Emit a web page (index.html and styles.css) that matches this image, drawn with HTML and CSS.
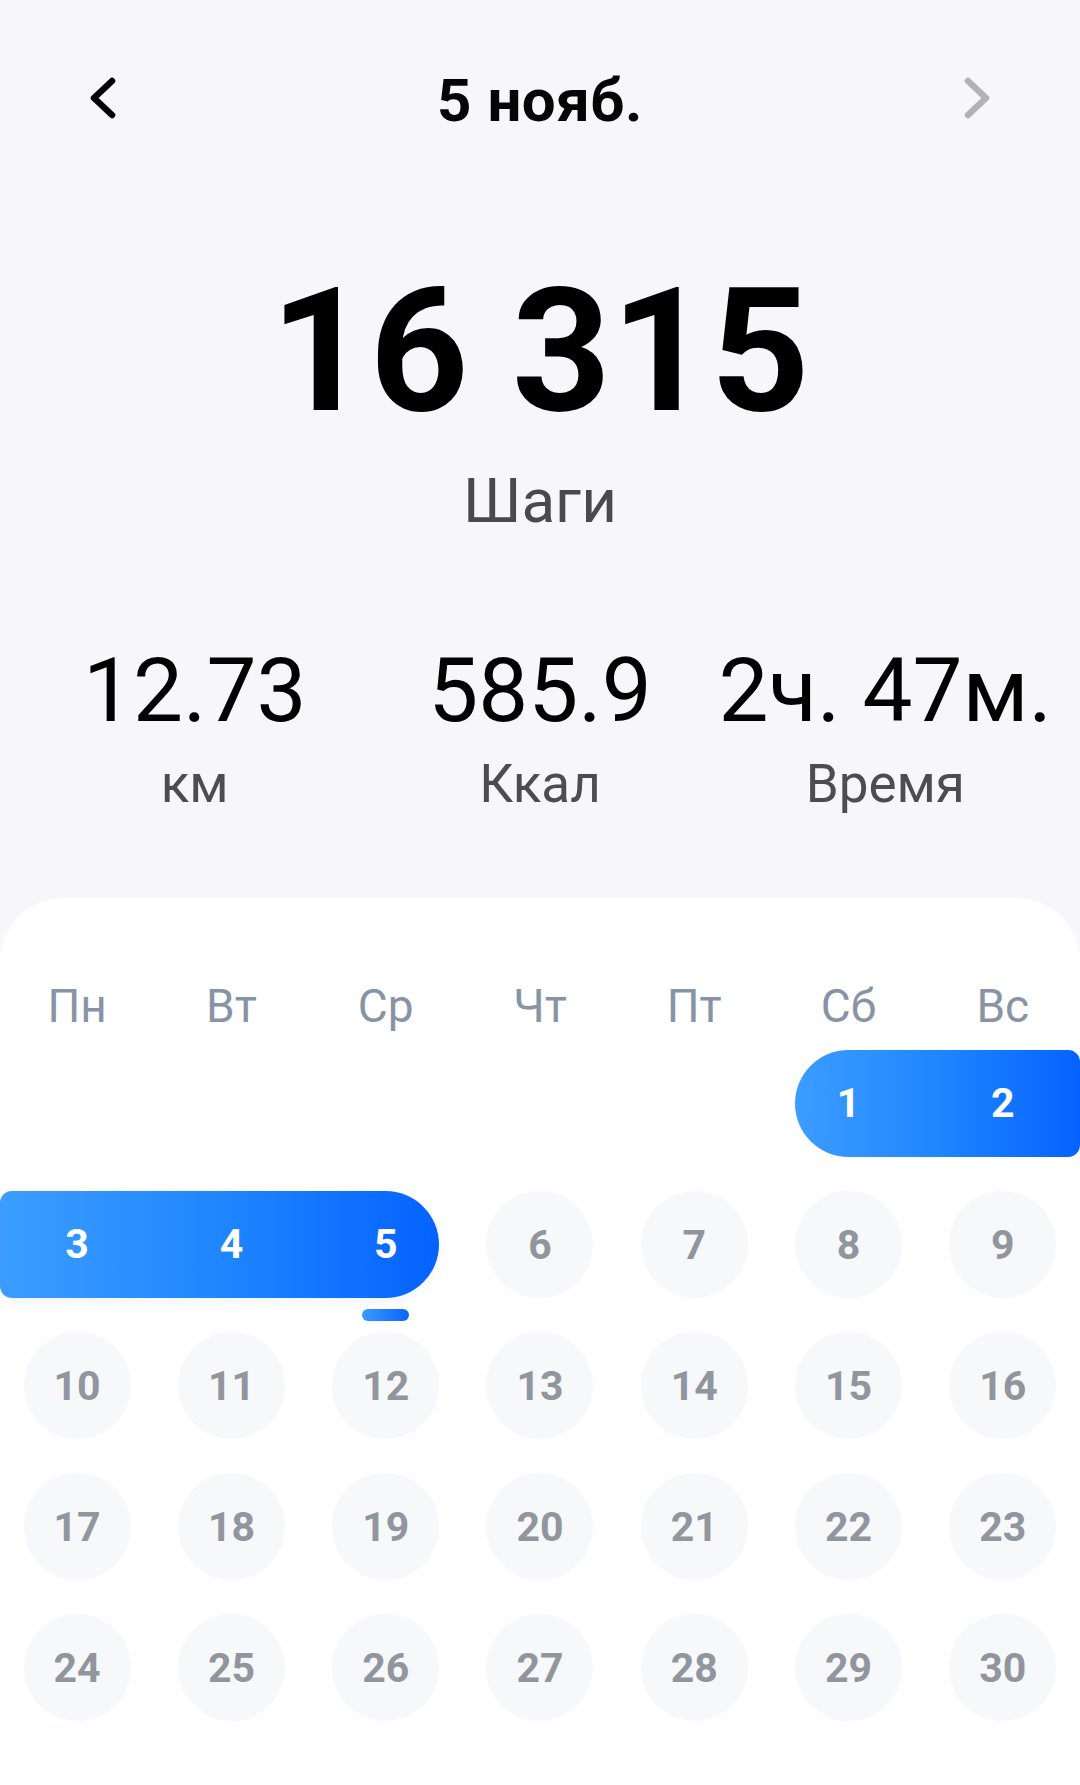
FILE: index.html
```html
<!DOCTYPE html>
<html lang="ru">
<head>
<meta charset="utf-8">
<title>Шаги</title>
<link rel="stylesheet" href="styles.css">
</head>
<body>
<div class="page">
  <header class="topbar">
    <svg class="chev" width="30" height="44" viewBox="0 0 30 44"><path d="M24 5 L6 22 L24 39" fill="none" stroke="#000" stroke-width="6.5" stroke-linecap="round" stroke-linejoin="round"/></svg>
    <div class="title">5 нояб.</div>
    <svg class="chev" width="30" height="44" viewBox="0 0 30 44"><path d="M6 5 L24 22 L6 39" fill="none" stroke="#b1b1b6" stroke-width="6.5" stroke-linecap="round" stroke-linejoin="round"/></svg>
  </header>

  <section class="summary">
    <div class="steps">16 315</div>
    <div class="steps-label">Шаги</div>
  </section>

  <section class="stats">
    <div class="stat"><div class="stat-value">12.73</div><div class="stat-label">км</div></div>
    <div class="stat"><div class="stat-value">585.9</div><div class="stat-label">Ккал</div></div>
    <div class="stat"><div class="stat-value">2ч. 47м.</div><div class="stat-label">Время</div></div>
  </section>

  <section class="card">
    <div class="weekdays">
      <div>Пн</div><div>Вт</div><div>Ср</div><div>Чт</div><div>Пт</div><div>Сб</div><div>Вс</div>
    </div>
    <div class="days">
      <div class="blank"></div><div class="blank"></div><div class="blank"></div><div class="blank"></div><div class="blank"></div>
      <div class="range range-end">
        <span>1</span><span>2</span>
      </div>
      <div class="range range-start">
        <span>3</span><span>4</span><span class="today">5</span>
      </div>
      <div class="day">6</div><div class="day">7</div><div class="day">8</div><div class="day">9</div>
      <div class="day">10</div><div class="day">11</div><div class="day">12</div><div class="day">13</div><div class="day">14</div><div class="day">15</div><div class="day">16</div>
      <div class="day">17</div><div class="day">18</div><div class="day">19</div><div class="day">20</div><div class="day">21</div><div class="day">22</div><div class="day">23</div>
      <div class="day">24</div><div class="day">25</div><div class="day">26</div><div class="day">27</div><div class="day">28</div><div class="day">29</div><div class="day">30</div>
    </div>
  </section>
</div>
</body>
</html>
```

FILE: styles.css
```css
html, body {
  margin: 0;
  padding: 0;
}

body {
  background: #f7f7fb;
  font-family: Roboto, "Noto Sans", "DejaVu Sans", sans-serif;
  color: #000;
}

.page {
  min-height: 1785px;
  display: flex;
  flex-direction: column;
}

.topbar {
  height: 196px;
  padding: 0 88px;
  display: flex;
  align-items: center;
  justify-content: space-between;
}

.chev {
  display: block;
}

.title {
  margin-top: 6px;
  font-size: 60px;
  line-height: 60px;
  font-weight: 700;
  letter-spacing: 0.5px;
  color: #050505;
}

.summary {
  display: flex;
  flex-direction: column;
  align-items: center;
  margin-top: 69px;
}

.steps {
  font-size: 173px;
  line-height: 172px;
  font-weight: 700;
  letter-spacing: 0;
}

.steps-label {
  margin-top: 33px;
  font-size: 62px;
  line-height: 62px;
  color: #4a4a4c;
}

.stats {
  margin-top: 114px;
  padding: 0 22px;
  display: grid;
  grid-template-columns: repeat(3, 1fr);
}

.stat {
  display: flex;
  flex-direction: column;
  align-items: center;
}

.stat-value {
  font-size: 89px;
  line-height: 89px;
  white-space: nowrap;
}

.stat-label {
  margin-top: 23px;
  font-size: 53px;
  line-height: 53px;
  color: #4d4d4f;
}

.card {
  margin-top: 87px;
  flex: 1;
  background: #ffffff;
  border-radius: 64px 64px 0 0;
  padding-top: 85px;
}

.weekdays,
.days {
  display: grid;
  grid-template-columns: repeat(7, 107px);
  column-gap: 47.29px;
  padding: 0 23.64px;
}

.weekdays > div {
  text-align: center;
  font-size: 46px;
  line-height: 46px;
  color: #8794a6;
  white-space: nowrap;
}

.days {
  margin-top: 21px;
  grid-auto-rows: 107px;
  row-gap: 34px;
}

.day {
  border-radius: 50%;
  background: #f7f8fa;
  color: #91959e;
  font-size: 41px;
  font-weight: 700;
  display: flex;
  align-items: center;
  justify-content: center;
}

.range {
  display: grid;
  grid-auto-flow: column;
  grid-auto-columns: 107px;
  column-gap: 47.29px;
  align-items: center;
  color: #fff;
  font-size: 41px;
  font-weight: 700;
  background: linear-gradient(90deg, #3c9dff 0%, #1f86ff 50%, #0562ff 100%);
}

.range span {
  text-align: center;
  position: relative;
  line-height: 107px;
}

.range-end {
  grid-column: span 2;
  margin-right: -23.64px;
  padding-right: 23.64px;
  border-radius: 54px 12px 12px 54px;
}

.range-start {
  grid-column: span 3;
  margin-left: -23.64px;
  padding-left: 23.64px;
  border-radius: 12px 54px 54px 12px;
  box-shadow: 0 6px 10px rgba(40, 120, 255, 0.06);
}

.today::after {
  content: "";
  position: absolute;
  left: 30px;
  top: calc(100% + 11px);
  width: 47px;
  height: 12px;
  border-radius: 6px;
  background: linear-gradient(90deg, #3a9bff, #0a66ff);
}
```
